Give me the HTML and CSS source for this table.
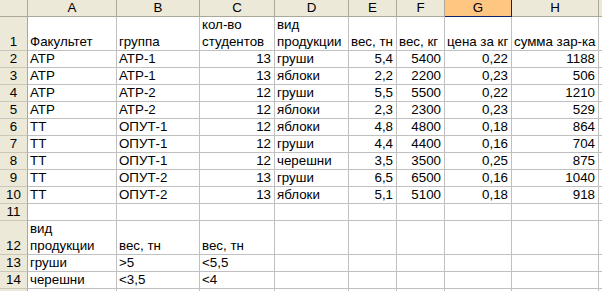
FILE: index.html
```html
<!DOCTYPE html>
<html lang="ru">
<head>
<meta charset="utf-8">
<title>Лист</title>
<link rel="stylesheet" href="styles.css">
</head>
<body>
<div class="sheet">
  <div class="ch corner"></div>
  <div class="ch">A</div><div class="ch">B</div><div class="ch">C</div><div class="ch">D</div><div class="ch">E</div><div class="ch">F</div><div class="ch sel">G</div><div class="ch">H</div><div class="ch"></div>

  <div class="rh tall">1</div>
  <div class="c tall">Факультет</div><div class="c tall">группа</div><div class="c tall">кол-во студентов</div><div class="c tall">вид продукции</div><div class="c tall">вес, тн</div><div class="c tall">вес, кг</div><div class="c tall">цена за кг</div><div class="c tall">сумма зар-ка</div><div class="c tall"></div>

  <div class="rh">2</div>
  <div class="c">АТР</div><div class="c">АТР-1</div><div class="c n">13</div><div class="c">груши</div><div class="c n">5,4</div><div class="c n">5400</div><div class="c n">0,22</div><div class="c n">1188</div><div class="c"></div>
  <div class="rh">3</div>
  <div class="c">АТР</div><div class="c">АТР-1</div><div class="c n">13</div><div class="c">яблоки</div><div class="c n">2,2</div><div class="c n">2200</div><div class="c n">0,23</div><div class="c n">506</div><div class="c"></div>
  <div class="rh">4</div>
  <div class="c">АТР</div><div class="c">АТР-2</div><div class="c n">12</div><div class="c">груши</div><div class="c n">5,5</div><div class="c n">5500</div><div class="c n">0,22</div><div class="c n">1210</div><div class="c"></div>
  <div class="rh">5</div>
  <div class="c">АТР</div><div class="c">АТР-2</div><div class="c n">12</div><div class="c">яблоки</div><div class="c n">2,3</div><div class="c n">2300</div><div class="c n">0,23</div><div class="c n">529</div><div class="c"></div>
  <div class="rh">6</div>
  <div class="c">ТТ</div><div class="c">ОПУТ-1</div><div class="c n">12</div><div class="c">яблоки</div><div class="c n">4,8</div><div class="c n">4800</div><div class="c n">0,18</div><div class="c n">864</div><div class="c"></div>
  <div class="rh">7</div>
  <div class="c">ТТ</div><div class="c">ОПУТ-1</div><div class="c n">12</div><div class="c">груши</div><div class="c n">4,4</div><div class="c n">4400</div><div class="c n">0,16</div><div class="c n">704</div><div class="c"></div>
  <div class="rh">8</div>
  <div class="c">ТТ</div><div class="c">ОПУТ-1</div><div class="c n">12</div><div class="c">черешни</div><div class="c n">3,5</div><div class="c n">3500</div><div class="c n">0,25</div><div class="c n">875</div><div class="c"></div>
  <div class="rh">9</div>
  <div class="c">ТТ</div><div class="c">ОПУТ-2</div><div class="c n">13</div><div class="c">груши</div><div class="c n">6,5</div><div class="c n">6500</div><div class="c n">0,16</div><div class="c n">1040</div><div class="c"></div>
  <div class="rh">10</div>
  <div class="c">ТТ</div><div class="c">ОПУТ-2</div><div class="c n">13</div><div class="c">яблоки</div><div class="c n">5,1</div><div class="c n">5100</div><div class="c n">0,18</div><div class="c n">918</div><div class="c"></div>
  <div class="rh">11</div>
  <div class="c"></div><div class="c"></div><div class="c"></div><div class="c"></div><div class="c"></div><div class="c"></div><div class="c"></div><div class="c"></div><div class="c"></div>
  <div class="rh tall">12</div>
  <div class="c tall">вид продукции</div><div class="c tall">вес, тн</div><div class="c tall">вес, тн</div><div class="c tall"></div><div class="c tall"></div><div class="c tall"></div><div class="c tall"></div><div class="c tall"></div><div class="c tall"></div>
  <div class="rh">13</div>
  <div class="c">груши</div><div class="c">&gt;5</div><div class="c">&lt;5,5</div><div class="c"></div><div class="c"></div><div class="c"></div><div class="c"></div><div class="c"></div><div class="c"></div>
  <div class="rh">14</div>
  <div class="c">черешни</div><div class="c">&lt;3,5</div><div class="c">&lt;4</div><div class="c"></div><div class="c"></div><div class="c"></div><div class="c"></div><div class="c"></div><div class="c"></div>
  <div class="rh"></div>
  <div class="c"></div><div class="c"></div><div class="c"></div><div class="c"></div><div class="c"></div><div class="c"></div><div class="c"></div><div class="c"></div><div class="c"></div>
</div>
</body>
</html>
```

FILE: styles.css
```css
html, body {
  margin: 0;
  padding: 0;
  background: #ffffff;
  overflow: hidden;
}

.sheet {
  display: grid;
  grid-template-columns: 28px 89px 83px 75px 74px 48px 48px 67px 87px 20px;
  grid-auto-rows: 17px;
  font-family: "Liberation Sans", Arial, sans-serif;
  font-size: 13.33px;
  color: #000;
  width: 619px;
}

.c {
  box-sizing: border-box;
  border-right: 1px solid #c0c0c0;
  border-bottom: 1px solid #c0c0c0;
  padding: 0 2px 0 2px;
  line-height: 17px;
  display: flex;
  align-items: flex-end;
  overflow: hidden;
  white-space: nowrap;
  background: #fff;
}

.c.tall {
  height: 34px;
  white-space: normal;
  line-height: 17px;
  padding-bottom: 0;
}

.n {
  justify-content: flex-end;
  padding-right: 3px;
}

.tall {
  height: 34px;
}

.sheet > .tall {
  grid-row: span 2;
}

.ch {
  box-sizing: border-box;
  background: #ece9d8;
  border-right: 1px solid #aca899;
  border-bottom: 1px solid #aca899;
  text-align: center;
  line-height: 16px;
  height: 17px;
}

.ch.corner {
  background: #ece9d8;
}

.ch.sel {
  background: #ffc682;
  border-right: 1px solid #0a246a;
  border-bottom: 1px solid #0a246a;
}

.rh {
  box-sizing: border-box;
  background: #ece9d8;
  border-right: 1px solid #aca899;
  border-bottom: 1px solid #cbc7b8;
  display: flex;
  align-items: flex-end;
  justify-content: center;
  line-height: 17px;
}
```
